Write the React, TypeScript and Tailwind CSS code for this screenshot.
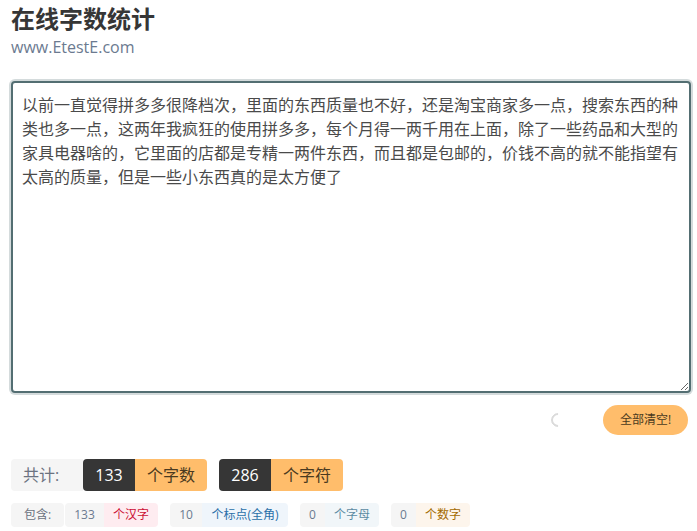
const FONT = "font-['Open_Sans','Noto_Sans_CJK_SC',sans-serif]";

const CONTENT =
  '以前一直觉得拼多多很降档次，里面的东西质量也不好，还是淘宝商家多一点，搜索东西的种类也多一点，这两年我疯狂的使用拼多多，每个月得一两千用在上面，除了一些药品和大型的家具电器啥的，它里面的店都是专精一两件东西，而且都是包邮的，价钱不高的就不能指望有太高的质量，但是一些小东西真的是太方便了';

const details = [
  { count: '133', label: '个汉字', countWidth: 'w-[39px]', labelClass: 'w-[54px] bg-[#feecf0] text-[#cc0f35]' },
  { count: '10', label: '个标点(全角)', countWidth: 'w-[32px]', labelClass: 'w-[86px] bg-[#eff5fb] text-[#296fa8]' },
  { count: '0', label: '个字母', countWidth: 'w-[25px]', labelClass: 'w-[54px] bg-[#f1f6f9] text-[#5b8ba3]' },
  { count: '0', label: '个数字', countWidth: 'w-[25px]', labelClass: 'w-[54px] bg-[#fdf5ec] text-[#a36a00]' },
];

function TotalTag({ count, label }: { count: string; label: string }) {
  return (
    <div className="flex h-8 text-base">
      <span className="flex w-[52px] items-center justify-center rounded-l bg-[#363636] text-white">{count}</span>
      <span className="flex w-[72px] items-center justify-center rounded-r bg-[#ffbd6b] text-[#4a3a20]">{label}</span>
    </div>
  );
}

export default function App() {
  return (
    <div className={`${FONT} h-[531px] w-[697px] overflow-hidden bg-white px-[11px] pt-[3px] text-[#4a4a4a]`}>
      <h1 className="h-8 text-2xl leading-8 font-bold text-[#363636]">在线字数统计</h1>
      <p className="h-6 text-base leading-6 text-[#6b7a90]">www.EtestE.com</p>

      <textarea
        readOnly
        value={CONTENT}
        className="mt-[22px] block h-[312px] w-[680px] resize rounded border-2 border-[#536e72] bg-white px-[9px] py-[10px] text-base leading-6 text-[#4a4a4a] shadow-[0_0_0_2px_rgba(83,110,114,0.25)] outline-none"
      />

      {/* Actions */}
      <div className="mt-3 flex h-[30px] w-[677px] items-center justify-end">
        <span className="mr-[38px] h-3.5 w-3.5 rotate-45 rounded-full border-2 border-t-transparent border-r-transparent border-b-[#dbdbdb] border-l-[#dbdbdb]" />
        <button className="h-[30px] w-[85px] rounded-full bg-[#ffbd6b] text-xs text-[#4a3a20]">全部清空!</button>
      </div>

      {/* Totals */}
      <div className="mt-6 flex gap-3">
        <div className="flex">
          <span className="flex h-8 w-[72px] items-center rounded-l bg-[#f5f5f5] pl-3 text-base text-[#6b7280]">共计:</span>
          <TotalTag count="133" label="个字数" />
        </div>
        <TotalTag count="286" label="个字符" />
      </div>

      {/* Breakdown */}
      <div className="mt-3 flex h-6 text-xs">
        <span className="mr-px flex w-[53px] items-center justify-center rounded bg-[#f5f5f5] text-[#6b7280]">包含:</span>
        <div className="flex gap-3">
          {details.map((item) => (
            <div key={item.label} className="flex">
              <span className={`flex items-center justify-center rounded-l bg-[#f5f5f5] text-[#6b7a90] ${item.countWidth}`}>{item.count}</span>
              <span className={`flex items-center justify-center rounded-r ${item.labelClass}`}>{item.label}</span>
            </div>
          ))}
        </div>
      </div>
    </div>
  );
}
